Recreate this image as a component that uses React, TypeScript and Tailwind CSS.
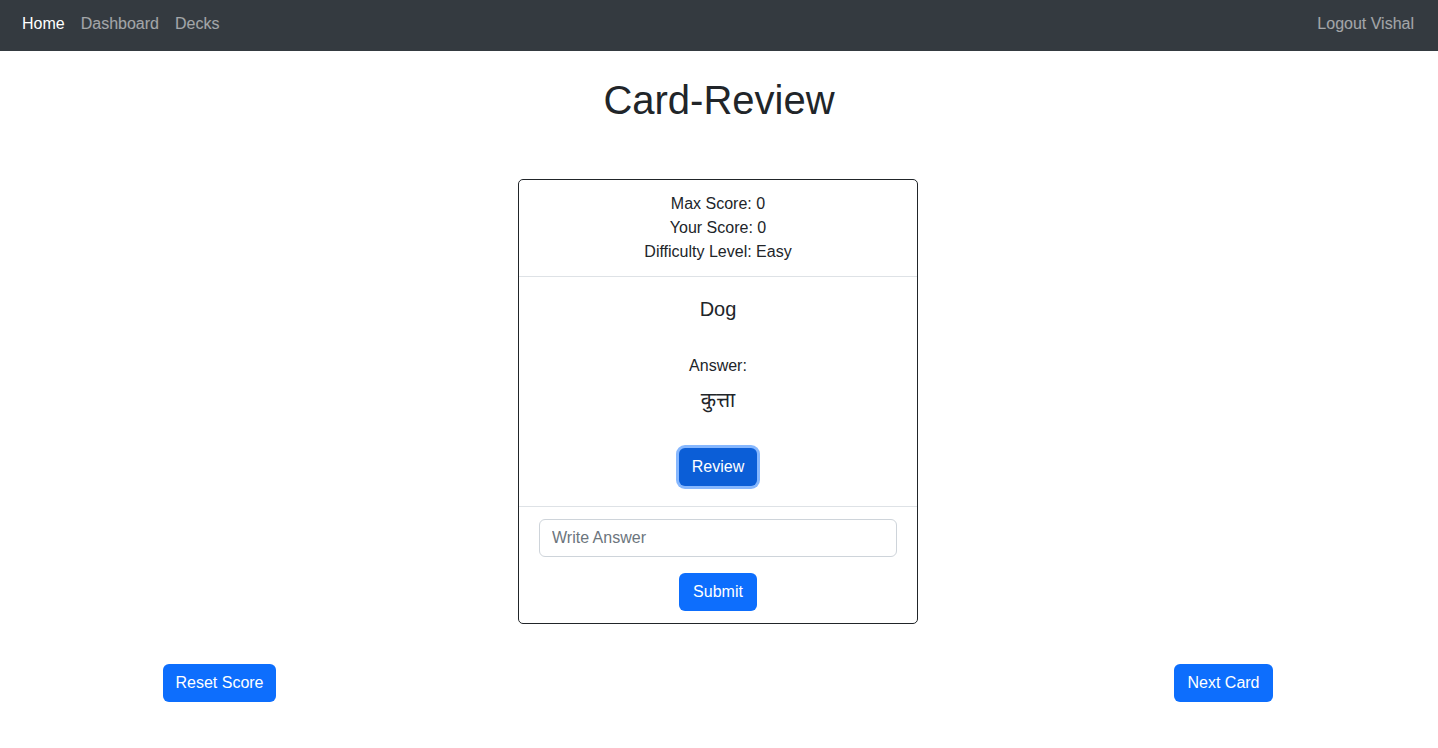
import React, { useState } from "react";

const font = { fontFamily: '"Liberation Sans", Arial, "Noto Sans", sans-serif' };

export default function App() {
  const [answer, setAnswer] = useState("");

  return (
    <div className="min-h-screen bg-white text-[#212529]" style={font}>
      <nav className="h-[51px] bg-[#343a40] flex items-center justify-between pl-[14px] pr-4 pb-1">
        <div className="flex items-center text-base">
          <a className="px-2 text-white">Home</a>
          <a className="px-2 text-white/55">Dashboard</a>
          <a className="px-2 text-white/55">Decks</a>
        </div>
        <a className="px-2 text-white/55 text-base">Logout Vishal</a>
      </nav>

      <h1 className="mt-[25px] text-[40px] leading-[48px] font-medium text-center">Card-Review</h1>

      <div className="mt-[55px] mx-auto w-[400px] -translate-x-px border border-[#212529] rounded-[5px]">
        <div className="py-3 text-center text-base leading-6 border-b border-[#dee2e6]">
          <div>Max Score: 0</div>
          <div>Your Score: 0</div>
          <div>Difficulty Level: Easy</div>
        </div>

        <div className="pt-5 pb-5 text-center border-b border-[#dee2e6]">
          <h5 className="text-[20px] leading-6 font-medium">Dog</h5>
          <div className="mt-[33px] text-base leading-6 font-medium">Answer:</div>
          <div className="mt-[10px] text-[20px] leading-6 font-normal">कुत्ता</div>
          <button className="mt-[36px] h-[38px] w-[78px] rounded-[6px] bg-[#0b5ed7] text-white text-base ring-[3px] ring-[#86b7fe]">
            Review
          </button>
        </div>

        <div className="px-5 pt-3 pb-3 flex flex-col items-center">
          <input
            value={answer}
            onChange={(e) => setAnswer(e.target.value)}
            placeholder="Write Answer"
            className="w-full h-[38px] px-3 border border-[#ced4da] rounded-[6px] text-base text-[#212529] placeholder:text-[#6c757d] outline-none"
          />
          <button className="mt-4 h-[38px] w-[78px] rounded-[6px] bg-[#0d6efd] text-white text-base">
            Submit
          </button>
        </div>
      </div>

      <div className="mt-10 flex justify-between pl-[163px] pr-[165px]">
        <button className="h-[38px] w-[113px] rounded-[6px] bg-[#0d6efd] text-white text-base">Reset Score</button>
        <button className="h-[38px] w-[99px] rounded-[6px] bg-[#0d6efd] text-white text-base">Next Card</button>
      </div>
    </div>
  );
}
